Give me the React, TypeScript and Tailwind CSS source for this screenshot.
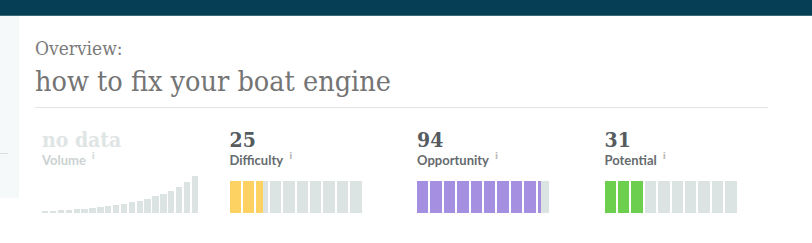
import React from "react";

const slab: React.CSSProperties = {
  fontFamily: '"DejaVu Serif Condensed", "DejaVu Serif", "Liberation Serif", serif',
  fontStretch: "condensed",
};

const volumeHeights = [2, 2, 3, 3, 4, 4, 5, 6, 7, 8, 9, 11, 12, 14, 17, 19, 22, 26, 31, 37];

function Info({ light }: { light?: boolean }) {
  return (
    <span
      className={`ml-[6px] align-top text-[9px] leading-[9px] font-bold ${light ? "text-[#d6dcdc]" : "text-[#bbbbbb]"}`}
      style={{ fontFamily: '"DejaVu Sans", sans-serif' }}
    >
      i
    </span>
  );
}

const BAR_W = 132;
const GAP = 2;
const SEG_W = (BAR_W - GAP * 9) / 10;

function SegBar({ value, color }: { value: number; color: string }) {
  const fillPx = (value / 100) * BAR_W;
  const segs = Array.from({ length: 10 }, (_, i) => {
    const start = i * (SEG_W + GAP);
    const px = Math.max(0, Math.min(SEG_W, fillPx - start));
    return px < 1 ? 0 : px / SEG_W;
  });
  return (
    <div className="flex h-[32px] w-[132px] gap-[2px]">
      {segs.map((f, i) => (
        <div key={i} className="relative flex-1 bg-[#dce3e3]">
          <div className="absolute inset-y-0 left-0" style={{ width: `${f * 100}%`, backgroundColor: color }} />
        </div>
      ))}
    </div>
  );
}

function Metric({
  value,
  label,
  muted,
  children,
}: {
  value: string;
  label: string;
  muted?: boolean;
  children: React.ReactNode;
}) {
  return (
    <div className="flex flex-col">
      <div
        className={`h-[24px] text-[21px] leading-[24px] font-bold ${muted ? "text-[#dfe5e5]" : "text-[#555b5e]"}`}
        style={slab}
      >
        {value}
      </div>
      <div
        className={`h-[16px] text-[13px] leading-[16px] font-bold ${muted ? "text-[#cbd2d2]" : "text-[#666b6e]"}`}
        style={{ fontFamily: 'Lato, "Open Sans", sans-serif' }}
      >
        {label}
        <Info light={muted} />
      </div>
      <div className="mt-[13px]">{children}</div>
    </div>
  );
}

export default function App() {
  return (
    <div className="h-[243px] w-[812px] overflow-hidden bg-white">
      <div className="h-[16px] border-b border-[#3d6c7e] bg-[#063f55]" />
      <div className="flex">
        <div className="flex h-[182px] w-[19px] flex-col bg-[#f5f9fa]">
          <div className="mt-[137px] h-px w-[8px] bg-[#dddddd]" />
        </div>
        <div className="flex-1 pl-[16px]">
          <div className="w-[733px]">
            <div className="mt-[21px] text-[19px] leading-[23px] text-[#7a7a7a]" style={slab}>
              Overview:
            </div>
            <div className="mt-[5px] text-[28.5px] leading-[34px] text-[#747474]" style={slab}>
              how to fix your boat engine
            </div>
            <div className="mt-[8px] h-px bg-[#e2e2e2]" />
          </div>
          <div className="mt-[20px] grid w-[757px] grid-cols-4 pl-[7px]">
            <Metric value="no data" label="Volume" muted>
              <div className="flex h-[32px] w-[156px] items-end gap-[1.5px]">
                {volumeHeights.map((h, i) => (
                  <div key={i} className="flex-1 bg-[#dce3e3]" style={{ height: `${h}px` }} />
                ))}
              </div>
            </Metric>
            <Metric value="25" label="Difficulty">
              <SegBar value={25} color="#fdd262" />
            </Metric>
            <Metric value="94" label="Opportunity">
              <SegBar value={94} color="#a58fe0" />
            </Metric>
            <Metric value="31" label="Potential">
              <SegBar value={31} color="#6ccf4e" />
            </Metric>
          </div>
        </div>
      </div>
    </div>
  );
}
